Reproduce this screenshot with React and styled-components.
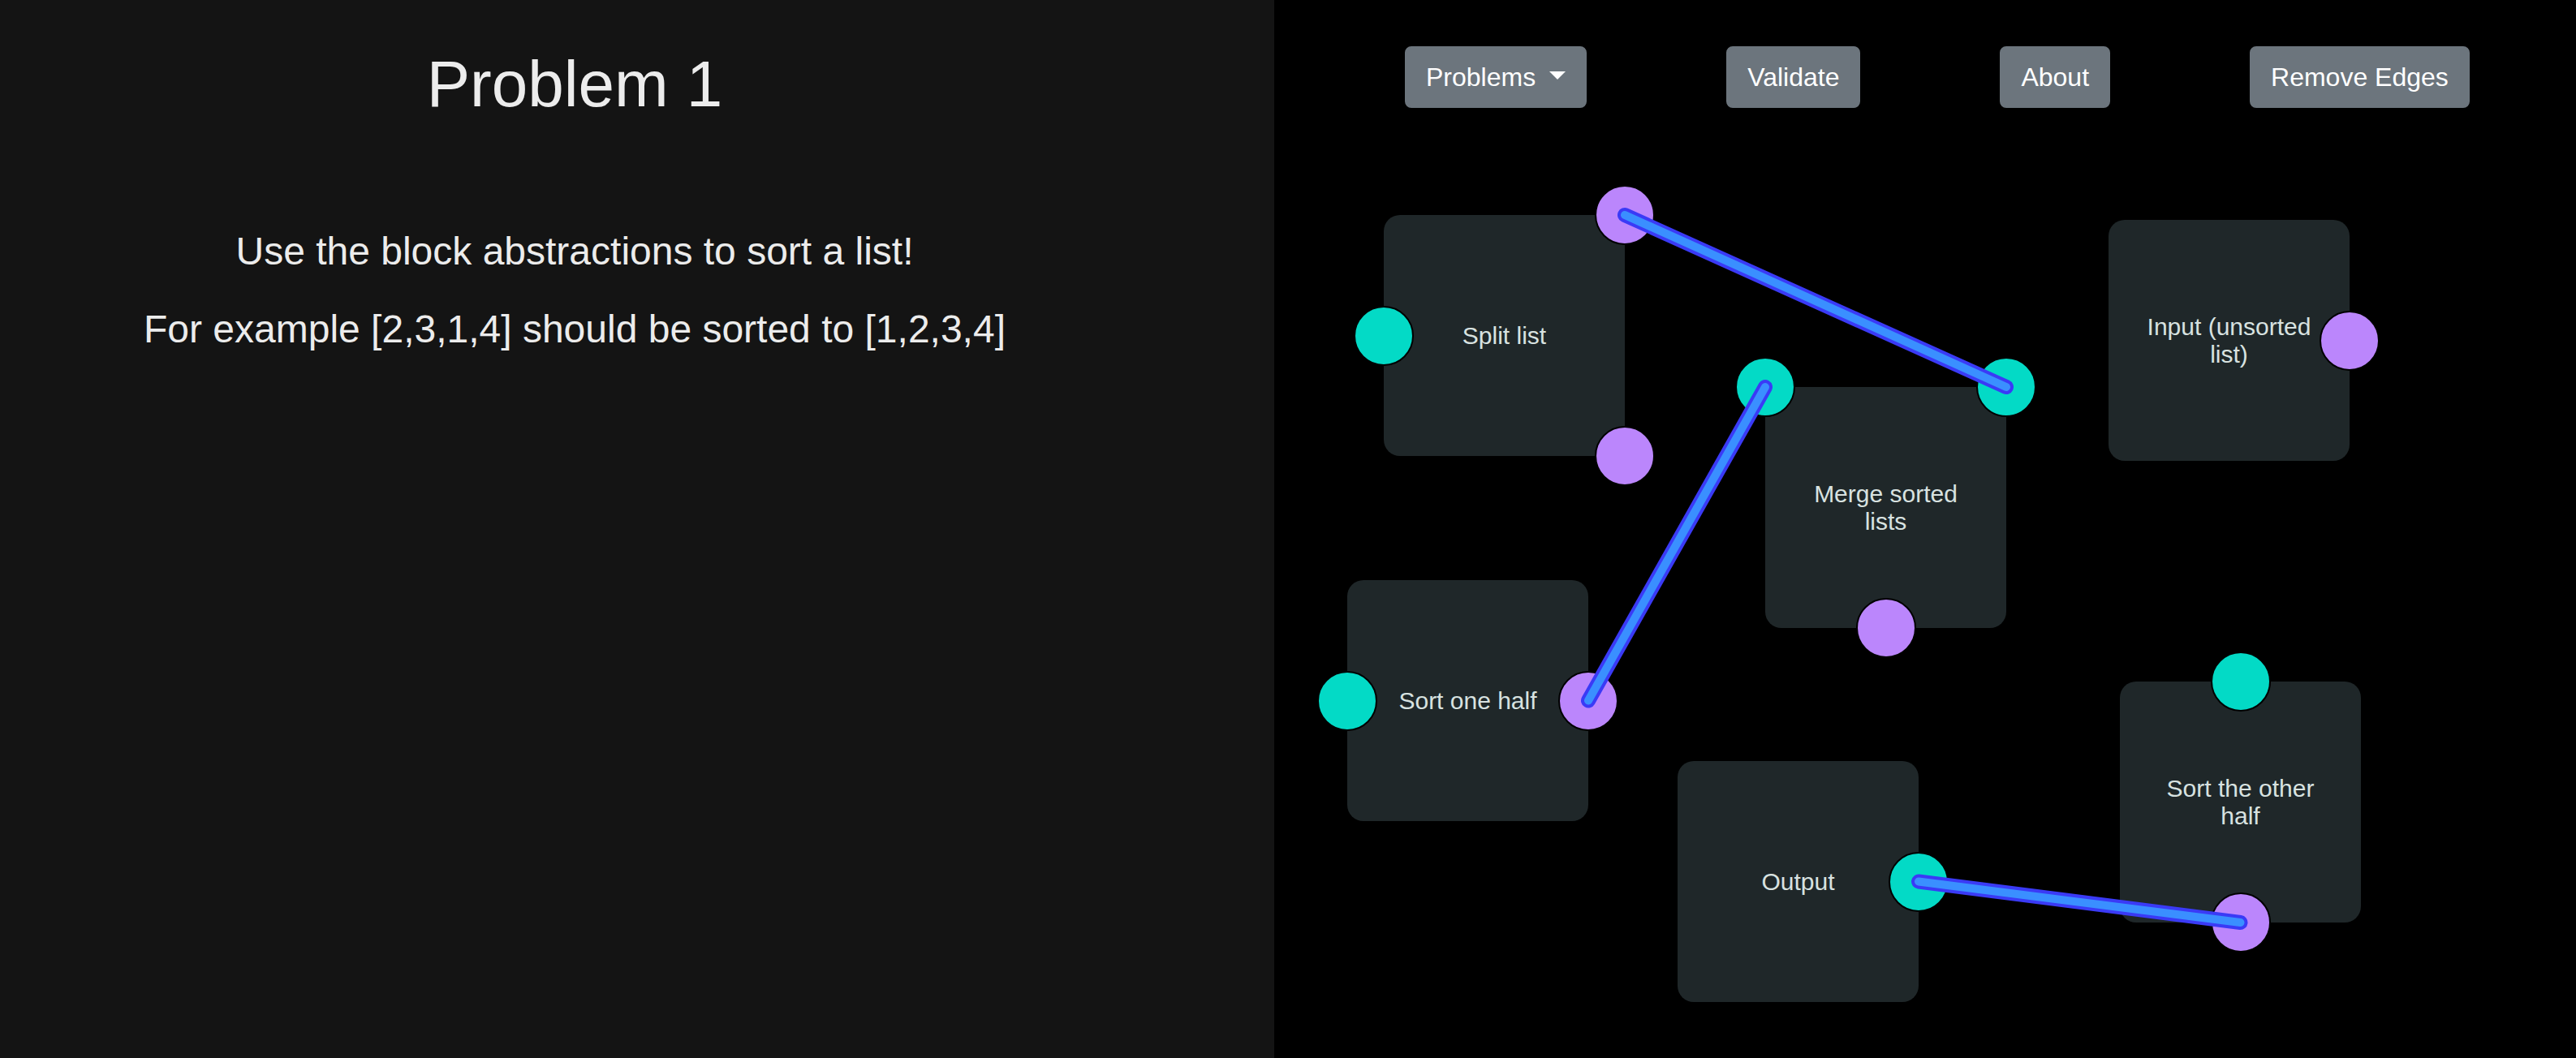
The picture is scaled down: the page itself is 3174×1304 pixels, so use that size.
import React from "react";
import styled, { createGlobalStyle, css } from "styled-components";

const GlobalStyle = createGlobalStyle`
  html, body, #root { height: 100%; }
  body {
    margin: 0;
    background: #000;
    font-family: "Liberation Sans", Arial, Helvetica, sans-serif;
  }
  * { box-sizing: border-box; }
`;

const Page = styled.div`
  display: flex;
  height: 100vh;
  width: 100%;
  overflow: hidden;
`;

const ProblemPanel = styled.section`
  flex: 0 0 1570px;
  background: #141414;
  color: #ececec;
  padding: 56px 154px 0 0;
  display: flex;
  flex-direction: column;
  align-items: center;
`;

const ProblemTitle = styled.h1`
  margin: 0 0 122px;
  font-size: 80px;
  line-height: 96px;
  font-weight: 400;
  text-align: center;
`;

const ProblemText = styled.p`
  margin: 0 0 24px;
  font-size: 48px;
  line-height: 72px;
  text-align: center;
`;

const Workspace = styled.main`
  flex: 1;
  display: flex;
  flex-direction: column;
  background: #000;
`;

const Toolbar = styled.nav`
  flex: 0 0 133px;
  display: flex;
  align-items: flex-start;
  gap: 172px;
  padding: 57px 0 0 161px;
`;

const ToolButton = styled.button`
  font-family: "Liberation Sans", Arial, Helvetica, sans-serif;
  font-size: 32px;
  line-height: 1.5;
  color: #fff;
  background: #6c757d;
  border: 2px solid #6c757d;
  border-radius: 8px;
  padding: 12px 24px;
  white-space: nowrap;
  cursor: pointer;
  ${(p) =>
    p.$caret &&
    css`
      &::after {
        content: "";
        display: inline-block;
        margin-left: 17px;
        vertical-align: 8px;
        border-top: 10px solid #fff;
        border-right: 10px solid transparent;
        border-left: 10px solid transparent;
        border-bottom: 0;
      }
    `}
`;

const Canvas = styled.div`
  flex: 1;
  position: relative;
`;

const NODE = 297;

const Block = styled.div`
  position: absolute;
  width: ${NODE}px;
  height: ${NODE}px;
  border-radius: 20px;
  background: #1f2729;
  display: flex;
  align-items: center;
  justify-content: center;
`;

const BlockLabel = styled.span`
  padding: 0 42px;
  font-size: 30px;
  line-height: 1.13;
  color: #d8e2e0;
  text-align: center;
`;

const Port = styled.span`
  position: absolute;
  left: ${(p) => p.$x};
  top: ${(p) => p.$y};
  width: 74px;
  height: 74px;
  transform: translate(-50%, -50%);
  border-radius: 50%;
  border: 2px solid #000;
  background: ${(p) => (p.$kind === "in" ? "#03dac6" : "#bb86fc")};
`;

const EdgeLayer = styled.svg`
  position: absolute;
  inset: 0;
  width: 100%;
  height: 100%;
  overflow: visible;
  pointer-events: none;
`;

const pos = { start: "0%", mid: "50%", end: "100%" };

const blocks = [
  {
    id: "split",
    label: "Split list",
    x: 135,
    y: 132,
    ports: [
      { kind: "in", x: "start", y: "mid" },
      { kind: "out", x: "end", y: "start" },
      { kind: "out", x: "end", y: "end" },
    ],
  },
  {
    id: "merge",
    label: "Merge sorted lists",
    x: 605,
    y: 344,
    ports: [
      { kind: "in", x: "start", y: "start" },
      { kind: "in", x: "end", y: "start" },
      { kind: "out", x: "mid", y: "end" },
    ],
  },
  {
    id: "input",
    label: "Input (unsorted list)",
    x: 1028,
    y: 138,
    ports: [{ kind: "out", x: "end", y: "mid" }],
  },
  {
    id: "sortOne",
    label: "Sort one half",
    x: 90,
    y: 582,
    ports: [
      { kind: "in", x: "start", y: "mid" },
      { kind: "out", x: "end", y: "mid" },
    ],
  },
  {
    id: "output",
    label: "Output",
    x: 497,
    y: 805,
    ports: [{ kind: "in", x: "end", y: "mid" }],
  },
  {
    id: "sortOther",
    label: "Sort the other half",
    x: 1042,
    y: 707,
    ports: [
      { kind: "in", x: "mid", y: "start" },
      { kind: "out", x: "mid", y: "end" },
    ],
  },
];

const frac = { start: 0, mid: 0.5, end: 1 };
const portPoint = (id, i) => {
  const b = blocks.find((n) => n.id === id);
  const p = b.ports[i];
  return [b.x + frac[p.x] * NODE, b.y + frac[p.y] * NODE];
};

const edges = [
  [portPoint("split", 1), portPoint("merge", 1)],
  [portPoint("merge", 0), portPoint("sortOne", 1)],
  [portPoint("output", 0), portPoint("sortOther", 1)],
];

export default function App() {
  return (
    <>
      <GlobalStyle />
      <Page>
        <ProblemPanel>
          <ProblemTitle>Problem 1</ProblemTitle>
          <ProblemText>Use the block abstractions to sort a list!</ProblemText>
          <ProblemText>For example [2,3,1,4] should be sorted to [1,2,3,4]</ProblemText>
        </ProblemPanel>
        <Workspace>
          <Toolbar>
            <ToolButton $caret>Problems</ToolButton>
            <ToolButton>Validate</ToolButton>
            <ToolButton>About</ToolButton>
            <ToolButton>Remove Edges</ToolButton>
          </Toolbar>
          <Canvas>
            {blocks.map((b) => (
              <Block key={b.id} style={{ left: b.x, top: b.y }}>
                <BlockLabel>{b.label}</BlockLabel>
                {b.ports.map((p, i) => (
                  <Port key={i} $kind={p.kind} $x={pos[p.x]} $y={pos[p.y]} />
                ))}
              </Block>
            ))}
            <EdgeLayer>
              {edges.map(([a, c], i) => (
                <g key={i} strokeLinecap="round">
                  <line x1={a[0]} y1={a[1]} x2={c[0]} y2={c[1]} stroke="#3a3af6" strokeWidth="18" />
                  <line x1={a[0]} y1={a[1]} x2={c[0]} y2={c[1]} stroke="#3a8fff" strokeWidth="10" />
                </g>
              ))}
            </EdgeLayer>
          </Canvas>
        </Workspace>
      </Page>
    </>
  );
}
